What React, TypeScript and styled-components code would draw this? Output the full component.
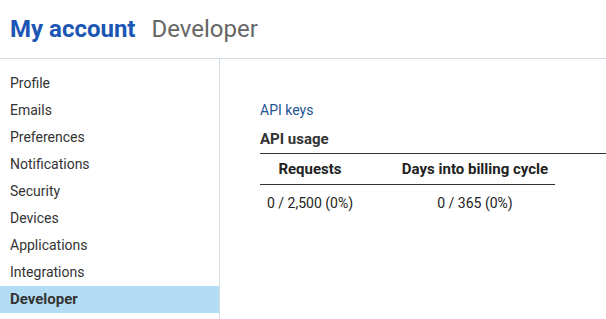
import React from "react";
import styled, { createGlobalStyle } from "styled-components";

const GlobalStyle = createGlobalStyle`
  html, body {
    margin: 0;
    padding: 0;
    background: #fff;
  }
  body {
    font-family: Roboto, "Liberation Sans", sans-serif;
    color: #333;
  }
`;

const navItems = [
  "Profile",
  "Emails",
  "Preferences",
  "Notifications",
  "Security",
  "Devices",
  "Applications",
  "Integrations",
  "Developer",
];

export default function App() {
  return (
    <>
      <GlobalStyle />
      <Page>
        <Header>
          <Title>My account</Title>
          <SubTitle>Developer</SubTitle>
        </Header>
        <Body>
          <Sidebar>
            {navItems.map((item) => (
              <NavItem key={item} $active={item === "Developer"}>
                {item}
              </NavItem>
            ))}
          </Sidebar>
          <Main>
            <Link href="#">API keys</Link>
            <SectionTitle>API usage</SectionTitle>
            <Table>
              <thead>
                <tr>
                  <HeadCell $first>Requests</HeadCell>
                  <HeadCell>Days into billing cycle</HeadCell>
                </tr>
              </thead>
              <tbody>
                <tr>
                  <DataCell $first>0 / 2,500 (0%)</DataCell>
                  <DataCell>0 / 365 (0%)</DataCell>
                </tr>
              </tbody>
            </Table>
          </Main>
        </Body>
      </Page>
    </>
  );
}

const Page = styled.div`
  width: 606px;
  height: 319px;
  display: flex;
  flex-direction: column;
  overflow: hidden;
`;

const Header = styled.header`
  height: 58px;
  display: flex;
  align-items: center;
  gap: 16px;
  padding: 0 10px;
  border-bottom: 1px solid #d0dce6;
  flex-shrink: 0;
`;

const Title = styled.h1`
  margin: 0;
  font-size: 24px;
  font-weight: 700;
  color: #1c56b4;
`;

const SubTitle = styled.span`
  font-size: 24px;
  color: #666;
`;

const Body = styled.div`
  flex: 1;
  display: flex;
`;

const Sidebar = styled.nav`
  width: 219px;
  flex-shrink: 0;
  border-right: 1px solid #d0dce6;
  padding-top: 11px;
  display: flex;
  flex-direction: column;
`;

const NavItem = styled.div<{ $active?: boolean }>`
  height: 27px;
  line-height: 27px;
  padding-left: 10px;
  font-size: ${({ $active }) => ($active ? "15px" : "14px")};
  color: #333;
  font-weight: ${({ $active }) => ($active ? 700 : 400)};
  background: ${({ $active }) => ($active ? "#b3ddf5" : "transparent")};
`;

const Main = styled.main`
  flex: 1;
  padding: 41px 0 0 40px;
  display: flex;
  flex-direction: column;
`;

const Link = styled.a`
  font-size: 14px;
  line-height: 20px;
  color: #1e5593;
  text-decoration: none;
  align-self: flex-start;
`;

const SectionTitle = styled.h2`
  margin: 9px 0 0;
  padding-bottom: 4px;
  font-size: 15px;
  line-height: 20px;
  font-weight: 700;
  color: #333;
  border-bottom: 1px solid #333;
`;

const Table = styled.table`
  width: 295px;
  border-collapse: collapse;
  font-size: 14px;
  color: #222;
`;

const HeadCell = styled.th<{ $first?: boolean }>`
  height: 30px;
  padding: 0 0 0 ${({ $first }) => ($first ? "0" : "35px")};
  width: ${({ $first }) => ($first ? "100px" : "auto")};
  font-size: 15px;
  font-weight: 700;
  text-align: center;
  border-bottom: 1px solid #333;
`;

const DataCell = styled.td<{ $first?: boolean }>`
  padding: 8px 0 8px ${({ $first }) => ($first ? "0" : "35px")};
  line-height: 20px;
  text-align: center;
`;
